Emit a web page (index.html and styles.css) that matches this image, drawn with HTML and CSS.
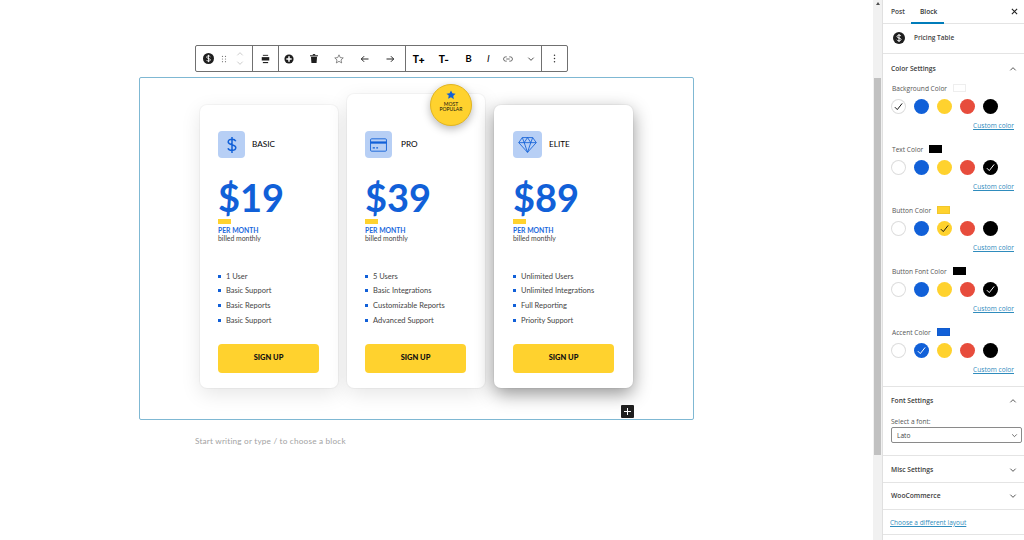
FILE: index.html
```html
<!DOCTYPE html>
<html lang="en">
<head>
  <meta charset="UTF-8">
  <title>Pricing Table</title>
  <link rel="stylesheet" href="styles.css">
</head>
<body>
<svg class="defs" width="0" height="0">
  <symbol id="dollar-badge" viewBox="0 0 20 20">
    <circle cx="10" cy="10" r="10" fill="#1e1e1e"/>
    <path d="M13.4 6.9c-.6-1.1-1.900-1.700-3.400-1.700-1.900 0-3.300 1-3.300 2.400 0 3.200 6.700 1.700 6.700 4.800 0 1.400-1.500 2.400-3.400 2.400-1.600 0-3-.7-3.500-1.900M10 3.400v13.200" fill="none" stroke="#fff" stroke-width="1.600"/>
  </symbol>
  <symbol id="check" viewBox="0 0 16 16">
    <path d="M3.500 8.800l3 3 6-7.600" fill="none" stroke="currentColor" stroke-width="1.200"/>
  </symbol>
  <symbol id="chev-up" viewBox="0 0 12 12">
    <path d="M2 8l4-4 4 4" fill="none" stroke="currentColor" stroke-width="1.300"/>
  </symbol>
  <symbol id="chev-down" viewBox="0 0 12 12">
    <path d="M2 4l4 4 4-4" fill="none" stroke="currentColor" stroke-width="1.300"/>
  </symbol>
</svg>

<main class="editor">
  <div class="toolbar">
    <div class="tool-group first">
      <button class="tool"><svg width="11" height="11"><use href="#dollar-badge"/></svg></button>
      <button class="tool narrow">
        <svg width="6" height="8" viewBox="0 0 8 10" fill="#777"><circle cx="2" cy="1.500" r=".8"/><circle cx="6" cy="1.500" r=".8"/><circle cx="2" cy="5" r=".8"/><circle cx="6" cy="5" r=".8"/><circle cx="2" cy="8.500" r=".8"/><circle cx="6" cy="8.500" r=".8"/></svg>
      </button>
      <div class="mover">
        <svg width="8" height="8" class="faint"><use href="#chev-up"/></svg>
        <svg width="8" height="8" class="faint"><use href="#chev-down"/></svg>
      </div>
    </div>
    <div class="tool-group">
      <button class="tool">
        <svg width="9" height="10" viewBox="0 0 12 12" fill="#1e1e1e"><rect x="1" y="3.500" width="10" height="4.500"/><rect x="2.500" y=".5" width="7" height="1.200"/><rect x="2.500" y="10" width="7" height="1.500"/></svg>
      </button>
    </div>
    <div class="tool-group actions">
      <button class="tool lead">
        <svg width="10" height="10" viewBox="0 0 12 12"><circle cx="6" cy="6" r="5.500" fill="#1e1e1e"/><path d="M6 2.800v6.400M2.800 6h6.400" stroke="#fff" stroke-width="1.800"/></svg>
      </button>
      <button class="tool">
        <svg width="8" height="9" viewBox="0 0 10 11" fill="#1e1e1e"><rect x="0" y="1.500" width="10" height="1.200"/><rect x="3.500" y="0" width="3" height="1.500"/><path d="M1.200 3.400h7.600l-.6 7.600H1.800z"/></svg>
      </button>
      <button class="tool">
        <svg width="10" height="10" viewBox="0 0 12 12"><path d="M6 1l1.500 3.300 3.600.4-2.700 2.400.8 3.600L6 8.800l-3.200 1.900.8-3.600L.9 4.700l3.600-.4z" fill="none" stroke="#555" stroke-width=".8"/></svg>
      </button>
      <button class="tool">
        <svg width="9" height="8" viewBox="0 0 11 10"><path d="M10.500 5H1.500M5 1.500L1.500 5 5 8.500" fill="none" stroke="#1e1e1e" stroke-width="1.200"/></svg>
      </button>
      <button class="tool">
        <svg width="9" height="8" viewBox="0 0 11 10"><path d="M.5 5h9M6 1.500L9.500 5 6 8.500" fill="none" stroke="#1e1e1e" stroke-width="1.200"/></svg>
      </button>
    </div>
    <div class="tool-group">
      <button class="tool text-tool">T+</button>
      <button class="tool text-tool">T-</button>
      <button class="tool text-tool small">B</button>
      <button class="tool text-tool small slim italic">I</button>
      <button class="tool">
        <svg width="10" height="6" viewBox="0 0 11 7"><path d="M4 1H2.800a2.500 2.500 0 000 5H4M7 1h1.200a2.500 2.500 0 010 5H7M3.500 3.500h4" fill="none" stroke="#444" stroke-width=".9"/></svg>
      </button>
      <button class="tool slim"><svg width="8" height="8" class="dark"><use href="#chev-down"/></svg></button>
    </div>
    <div class="tool-group last">
      <button class="tool">
        <svg width="3" height="9" viewBox="0 0 3 11" fill="#333"><circle cx="1.500" cy="1.500" r=".9"/><circle cx="1.500" cy="5.500" r=".9"/><circle cx="1.500" cy="9.500" r=".9"/></svg>
      </button>
    </div>
  </div>

  <section class="block">
    <div class="plans">
      <article class="plan">
        <div class="plan-head">
          <div class="plan-icon">
            <svg width="10" height="16" viewBox="0 0 10 16"><path d="M8.800 4.200C8.200 2.900 6.800 2.200 5 2.200c-2.200 0-3.800 1-3.800 2.700 0 3.500 7.600 2 7.600 5.700 0 1.700-1.600 2.800-3.800 2.800-2 0-3.500-.8-4-2.200M5 0v16" fill="none" stroke="#1160d8" stroke-width="1.500"/></svg>
          </div>
          <h2 class="plan-name">BASIC</h2>
        </div>
        <div class="price">$19</div>
        <div class="accent-bar"></div>
        <div class="period">PER MONTH</div>
        <div class="billed">billed monthly</div>
        <ul class="features">
          <li>1 User</li>
          <li>Basic Support</li>
          <li>Basic Reports</li>
          <li>Basic Support</li>
        </ul>
        <a class="signup">SIGN UP</a>
      </article>

      <article class="plan featured">
        <div class="badge">
          <svg width="10" height="10" viewBox="0 0 12 12"><path d="M6 .5l1.700 3.500 3.800.5-2.800 2.700.7 3.800L6 8.800 2.600 10.500l.7-3.800L.5 4.500l3.800-.5z" fill="#1160d8"/></svg>
          <span>MOST<br>POPULAR</span>
        </div>
        <div class="plan-head">
          <div class="plan-icon">
            <svg width="17" height="14" viewBox="0 0 19 15" fill="none" stroke="#1160d8"><rect x=".6" y=".6" width="17.800" height="13.800" rx="1.200"/><rect x=".6" y="3.500" width="17.800" height="2.500" fill="#1160d8" stroke="none"/><path d="M3 10.800h2.500M7 10.800h2" stroke-width="1.500"/></svg>
          </div>
          <h2 class="plan-name">PRO</h2>
        </div>
        <div class="price">$39</div>
        <div class="accent-bar"></div>
        <div class="period">PER MONTH</div>
        <div class="billed">billed monthly</div>
        <ul class="features">
          <li>5 Users</li>
          <li>Basic Integrations</li>
          <li>Customizable Reports</li>
          <li>Advanced Support</li>
        </ul>
        <a class="signup">SIGN UP</a>
      </article>

      <article class="plan elite">
        <div class="plan-head">
          <div class="plan-icon">
            <svg width="19" height="16" viewBox="0 0 20 17" fill="none" stroke="#1160d8" stroke-width=".9"><path d="M4.500.6h11L19.300 6 10 16.300.7 6zM.7 6h18.600M6.500 6L10 16.300 13.500 6 10 .6 6.500 6zM4.500.6L6.500 6M15.500.6L13.500 6"/></svg>
          </div>
          <h2 class="plan-name">ELITE</h2>
        </div>
        <div class="price">$89</div>
        <div class="accent-bar"></div>
        <div class="period">PER MONTH</div>
        <div class="billed">billed monthly</div>
        <ul class="features">
          <li>Unlimited Users</li>
          <li>Unlimited Integrations</li>
          <li>Full Reporting</li>
          <li>Priority Support</li>
        </ul>
        <a class="signup">SIGN UP</a>
      </article>
    </div>
    <button class="add-block">
      <svg width="7" height="7" viewBox="0 0 9 9"><path d="M4.500 0v9M0 4.500h9" stroke="#fff" stroke-width="1.300"/></svg>
    </button>
  </section>

  <p class="placeholder">Start writing or type / to choose a block</p>
</main>

<div class="scrollbar">
  <div class="scroll-arrow"></div>
  <div class="scroll-thumb"></div>
</div>

<aside class="sidebar">
  <div class="tabs">
    <span class="tab">Post</span>
    <span class="tab active">Block</span>
    <svg class="close" width="7" height="7" viewBox="0 0 8 8"><path d="M1 1l6 6M7 1L1 7" stroke="#1e1e1e" stroke-width="1.200"/></svg>
  </div>
  <div class="block-card">
    <svg width="12" height="12"><use href="#dollar-badge"/></svg>
    <strong>Pricing Table</strong>
  </div>

  <section class="panel colors">
    <h3 class="panel-title">Color Settings <svg width="8" height="8"><use href="#chev-up"/></svg></h3>

    <div class="color-row">
      <div class="color-label">Background Color <i class="chip c-white"></i></div>
      <div class="swatches">
        <span class="swatch c-white selected"><svg width="13" height="13"><use href="#check"/></svg></span>
        <span class="swatch c-blue"></span><span class="swatch c-yellow"></span><span class="swatch c-red"></span><span class="swatch c-black"></span>
      </div>
      <a class="custom">Custom color</a>
    </div>

    <div class="color-row">
      <div class="color-label">Text Color <i class="chip c-black"></i></div>
      <div class="swatches">
        <span class="swatch c-white"></span><span class="swatch c-blue"></span><span class="swatch c-yellow"></span><span class="swatch c-red"></span>
        <span class="swatch c-black light"><svg width="13" height="13"><use href="#check"/></svg></span>
      </div>
      <a class="custom">Custom color</a>
    </div>

    <div class="color-row">
      <div class="color-label">Button Color <i class="chip c-yellow"></i></div>
      <div class="swatches">
        <span class="swatch c-white"></span><span class="swatch c-blue"></span>
        <span class="swatch c-yellow selected"><svg width="13" height="13"><use href="#check"/></svg></span>
        <span class="swatch c-red"></span><span class="swatch c-black"></span>
      </div>
      <a class="custom">Custom color</a>
    </div>

    <div class="color-row">
      <div class="color-label">Button Font Color <i class="chip c-black"></i></div>
      <div class="swatches">
        <span class="swatch c-white"></span><span class="swatch c-blue"></span><span class="swatch c-yellow"></span><span class="swatch c-red"></span>
        <span class="swatch c-black light"><svg width="13" height="13"><use href="#check"/></svg></span>
      </div>
      <a class="custom">Custom color</a>
    </div>

    <div class="color-row">
      <div class="color-label">Accent Color <i class="chip c-blue"></i></div>
      <div class="swatches">
        <span class="swatch c-white"></span>
        <span class="swatch c-blue light"><svg width="13" height="13"><use href="#check"/></svg></span>
        <span class="swatch c-yellow"></span><span class="swatch c-red"></span><span class="swatch c-black"></span>
      </div>
      <a class="custom">Custom color</a>
    </div>
  </section>

  <section class="panel fonts">
    <h3 class="panel-title">Font Settings <svg width="8" height="8"><use href="#chev-up"/></svg></h3>
    <div class="select-label">Select a font:</div>
    <div class="select">Lato <svg width="7" height="7"><use href="#chev-down"/></svg></div>
  </section>

  <section class="panel closed">
    <h3 class="panel-title">Misc Settings <svg width="8" height="8"><use href="#chev-down"/></svg></h3>
  </section>
  <section class="panel closed">
    <h3 class="panel-title">WooCommerce <svg width="8" height="8"><use href="#chev-down"/></svg></h3>
  </section>
  <section class="panel layout-link">
    <a>Choose a different layout</a>
  </section>
</aside>
</body>
</html>
```

FILE: styles.css
```css
* {
    box-sizing: border-box;
}
html, body {
    height: 100%;
}
body {
    margin: 0;
    display: flex;
    height: 540px;
    overflow: hidden;
    background: #fff;
    font-family: "Open Sans", "Noto Sans", sans-serif;
    color: #1e1e1e;
}
.defs {
    position: absolute;
}
button {
    font: inherit;
    background: none;
    border: 0;
    padding: 0;
}

/* editor canvas */
.editor {
    width: 873px;
    flex: none;
    padding: 45px 180px 0 139px;
}
.toolbar {
    display: flex;
    width: 373px;
    height: 27px;
    margin-left: 56px;
    margin-bottom: 5px;
    border: 1px solid #707070;
    border-radius: 2px;
    background: #fff;
}
.tool-group {
    display: flex;
    align-items: center;
    border-right: 1px solid #707070;
}
.tool-group.first {
    width: 57px;
}
.tool-group.actions {
    padding-right: 2px;
}
.tool-group.last {
    border-right: 0;
    flex: 1;
}
.tool {
    width: 25px;
    height: 25px;
    display: flex;
    align-items: center;
    justify-content: center;
    flex: none;
}
.tool-group.first .tool {
    width: 24px;
}
.tool-group.first .tool.narrow {
    width: 8px;
}
.tool-group.last .tool {
    width: 100%;
}
.tool-group.actions .tool {
    width: 25.500px;
}
.tool-group.actions .tool.lead {
    width: 22px;
    justify-content: flex-start;
    padding-left: 5px;
}
.tool.slim {
    width: 21px;
}
.mover {
    width: 24px;
    display: flex;
    flex-direction: column;
    align-items: center;
    gap: 1px;
}
.faint {
    color: #c4c4c4;
}
.dark {
    color: #333;
}
.text-tool {
    font-family: "Inter", sans-serif;
    font-weight: 700;
    font-size: 10px;
    letter-spacing: -.4px;
}
.text-tool.small {
    font-size: 9.500px;
    font-weight: 600;
}
.text-tool.slim {
    width: 14px;
}
.text-tool.italic {
    font-style: italic;
    font-weight: 400;
}
.block {
    position: relative;
    width: 555px;
    height: 343px;
    border: 1px solid #7fb8d3;
    border-radius: 2px;
}
.plans {
    display: flex;
    align-items: flex-end;
    gap: 9px;
    padding: 0 0 31px 60px;
    height: 100%;
}

/* pricing cards */
.plan {
    position: relative;
    width: 138px;
    height: 283px;
    padding: 26px 18px 0;
    background: #fff;
    border-radius: 7px;
    font-family: "Lato", sans-serif;
    box-shadow: 0 0 0 1px rgba(0,0,0,.03), 0 6px 20px rgba(0,0,0,.1);
}
.plan.featured {
    height: 294px;
    padding-top: 37px;
}
.plan.elite {
    width: 139px;
    padding-left: 19px;
    box-shadow: 0 0 0 1px rgba(0,0,0,.03), 0 6px 18px rgba(0,0,0,.42);
}
.plan-head {
    display: flex;
    align-items: center;
    gap: 7px;
}
.featured .plan-head {
    gap: 9px;
}
.plan-icon {
    width: 27px;
    height: 27px;
    flex: none;
    display: flex;
    align-items: center;
    justify-content: center;
    background: #b7cff5;
    border-radius: 4px;
}
.elite .plan-icon {
    width: 29px;
}
.plan-name {
    margin: 0 0 2px;
    font-size: 8.200px;
    font-weight: 400;
    line-height: 12px;
    color: #000;
}
.price {
    margin-top: 16px;
    font-size: 38px;
    line-height: 46px;
    font-weight: 700;
    color: #1160d8;
}
.accent-bar {
    width: 13px;
    height: 5px;
    margin-top: -1px;
    background: #ffd22e;
}
.period {
    padding-top: 1px;
    height: 11px;
    font-size: 6.800px;
    line-height: 10px;
    font-weight: 700;
    color: #1a68dc;
}
.billed {
    font-size: 6.900px;
    line-height: 7px;
    color: #444;
}
.features {
    list-style: none;
    margin: 26.500px 0 0;
    padding: 0;
    height: 67px;
}
.features li {
    position: relative;
    height: 14.800px;
    padding-left: 8px;
    font-size: 7.500px;
    line-height: 15px;
    color: #444;
}
.features li::before {
    content: "";
    position: absolute;
    left: 0;
    top: 6px;
    width: 3px;
    height: 3px;
    background: #1160d8;
}
.signup {
    display: block;
    width: 101px;
    height: 28.500px;
    margin-top: 8.500px;
    background: #ffd22e;
    border-radius: 4px;
    text-align: center;
    font-size: 7.500px;
    font-weight: 900;
    line-height: 28px;
    color: #111;
}
.badge {
    position: absolute;
    top: -10px;
    left: 83px;
    width: 42px;
    height: 42px;
    display: flex;
    flex-direction: column;
    align-items: center;
    padding-top: 5px;
    background: #ffd22e;
    border: 1px solid #e2b51f;
    border-radius: 50%;
    box-shadow: 0 3px 8px rgba(0,0,0,.28);
}
.badge span {
    font-size: 5px;
    line-height: 4.500px;
    text-align: center;
    color: #111;
    margin-top: 2px;
}
.add-block {
    position: absolute;
    right: 59px;
    bottom: 1px;
    width: 13px;
    height: 13px;
    display: flex;
    align-items: center;
    justify-content: center;
    background: #1e1e1e;
    border-radius: 1px;
}
.placeholder {
    margin: 15px 0 0 56px;
    font-size: 8.200px;
    line-height: 12px;
    color: #a3a3a3;
    font-family: "Lato", sans-serif;
    letter-spacing: .2px;
}

/* page scrollbar */
.scrollbar {
    width: 9px;
    flex: none;
    background: #f1f1f1;
}
.scroll-arrow {
    width: 0;
    height: 0;
    margin: 2px auto 73px;
    border: 2px solid transparent;
    border-top: 0;
    border-bottom: 3px solid #505050;
}
.scroll-thumb {
    height: 377px;
    margin: 0 1px;
    background: #c1c1c1;
}

/* settings sidebar */
.sidebar {
    width: 142px;
    flex: none;
    border-left: 1px solid #e0e0e0;
    font-size: 6.600px;
    color: #444;
}
.tabs {
    display: flex;
    align-items: center;
    height: 24px;
    border-bottom: 1px solid #e4e4e4;
    color: #444;
}
.tab {
    height: 24px;
    line-height: 23px;
    width: 20px;
    padding-left: 8px;
    font-weight: 600;
}
.tab.active {
    width: 33px;
    margin-left: 8px;
    padding-left: 9px;
    color: #333;
    border-bottom: 2px solid #007cba;
}
.close {
    margin-left: auto;
    margin-right: 6px;
}
.block-card {
    display: flex;
    align-items: flex-start;
    gap: 9px;
    height: 30px;
    padding: 8px 0 0 10px;
    border-bottom: 1px solid #e4e4e4;
}
.block-card strong {
    font-weight: 600;
    line-height: 11px;
    font-size: 6.500px;
    color: #444;
}
.panel {
    border-bottom: 1px solid #e4e4e4;
    padding: 0 8px;
}
.panel-title {
    display: flex;
    justify-content: space-between;
    align-items: center;
    margin: 0;
    font-size: 6.700px;
    font-weight: 600;
    line-height: 10px;
    color: #3c3c3c;
}
.panel-title svg {
    margin-right: -1px;
}
.colors {
    height: 333px;
    padding-top: 10px;
}
.colors .panel-title {
    margin-bottom: 9px;
}
.color-row {
    height: 61px;
}
.color-label {
    display: flex;
    align-items: center;
    gap: 6px;
    height: 10px;
    padding-left: 1px;
    color: #555;
}
.chip {
    width: 13px;
    height: 8px;
    border: 1px solid rgba(0,0,0,.05);
}
.chip.c-white {
    box-shadow: none;
    border-color: #eee;
}
.swatches {
    display: flex;
    gap: 8px;
    margin-top: 6px;
}
.swatch {
    width: 15px;
    height: 15px;
    flex: none;
    display: flex;
    align-items: center;
    justify-content: center;
    border-radius: 50%;
    color: #111;
}
.swatch.light {
    color: #fff;
}
.c-white {
    background: #fff;
    box-shadow: inset 0 0 0 1px #ddd;
}
.c-blue {
    background: #1160d8;
}
.c-yellow {
    background: #ffd22e;
}
.c-red {
    background: #e74c3c;
}
.c-black {
    background: #000;
}
.custom {
    display: block;
    margin: 7px 2px 0 0;
    text-align: right;
    color: #2f8cbd;
    text-decoration: underline;
    line-height: 9px;
}
.fonts {
    height: 69px;
    padding-top: 9px;
}
.select-label {
    margin-top: 11px;
    line-height: 10px;
    color: #555;
}
.select {
    display: flex;
    justify-content: space-between;
    align-items: center;
    height: 16px;
    width: 131px;
    padding: 0 3px 0 5px;
    border: 1px solid #8a8a8a;
    border-radius: 2px;
}
.closed {
    height: 27px;
    padding-top: 9px;
}
.closed + .closed {
    padding-top: 8px;
}
.layout-link {
    height: 25px;
    padding-top: 8px;
    padding-left: 7px;
}
.layout-link a {
    color: #2f8cbd;
    text-decoration: underline;
    font-size: 6.500px;
}
```
